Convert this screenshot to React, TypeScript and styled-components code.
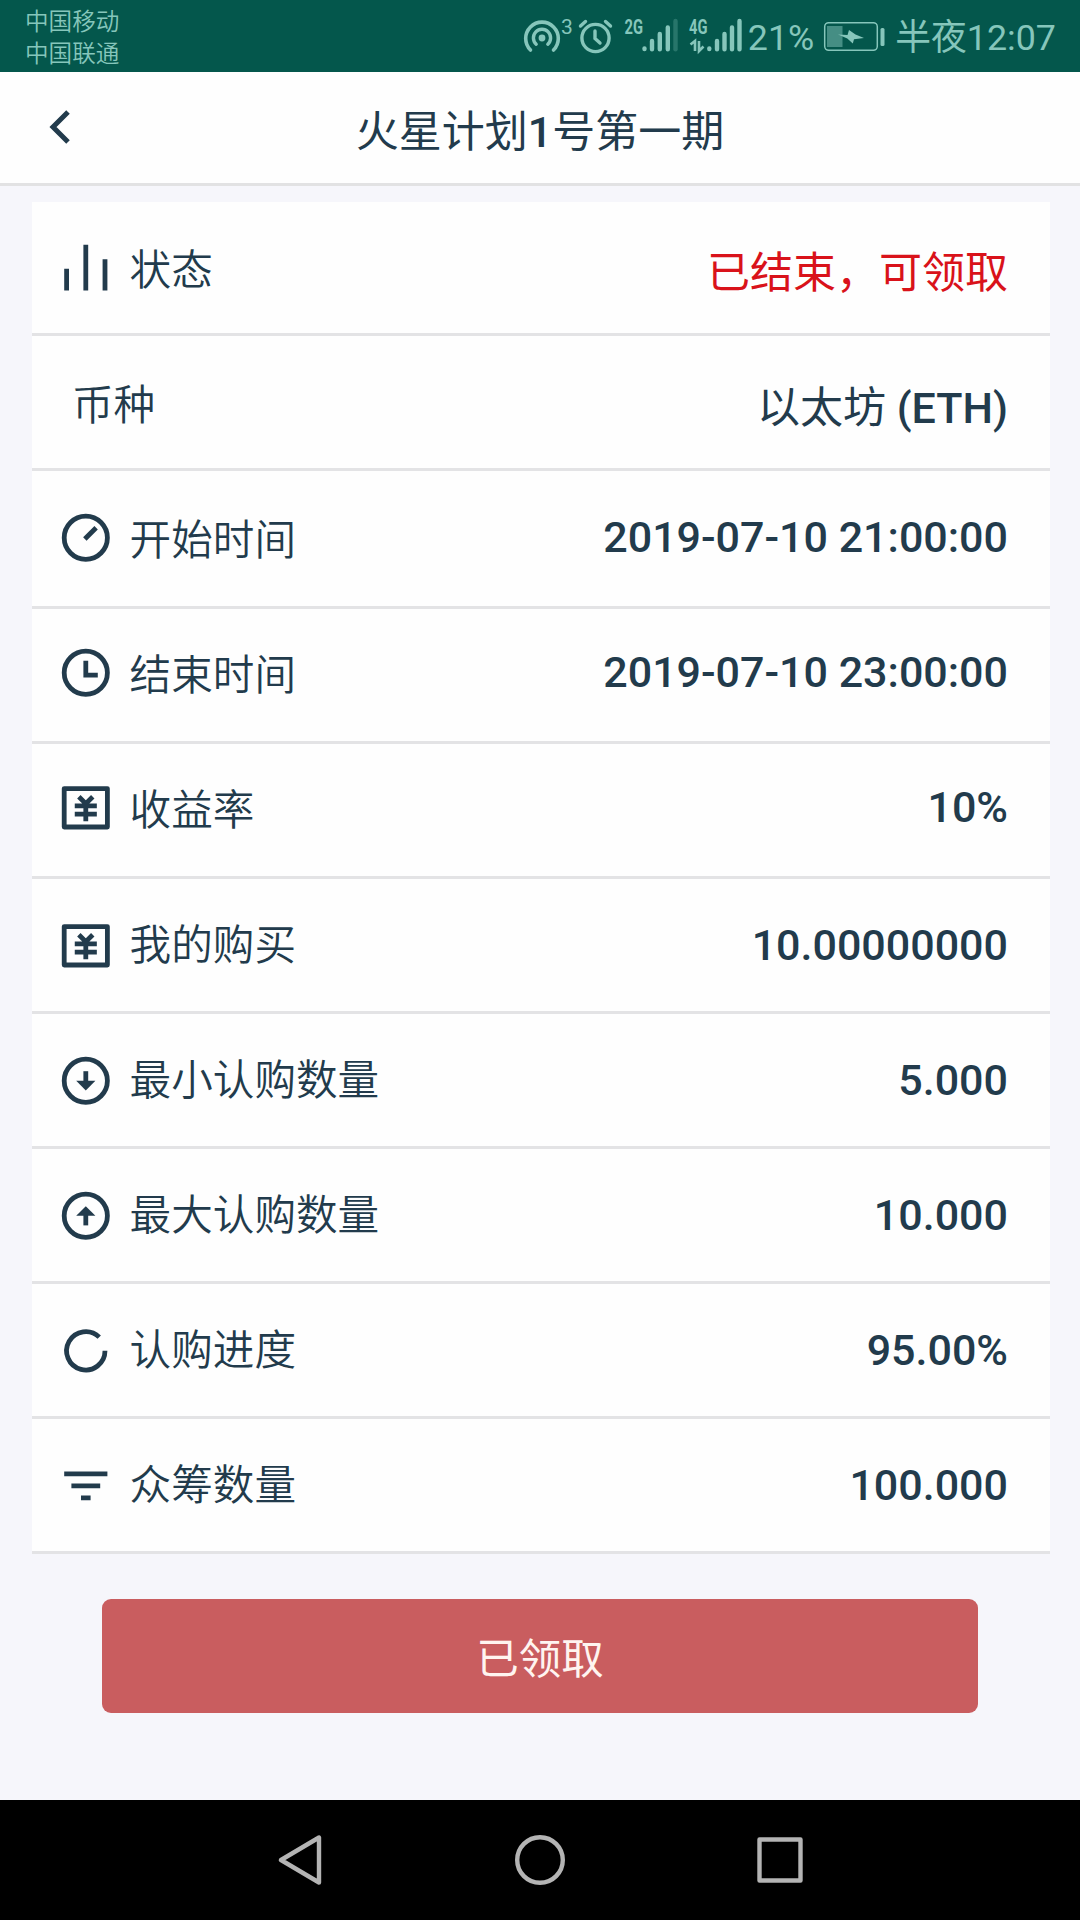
import React from 'react';
import styled, { createGlobalStyle } from 'styled-components';

const ink = '#223b4c';
const mint = '#86c6bb';
const latin = `Roboto, "Noto Sans CJK SC", sans-serif`;

const GlobalStyle = createGlobalStyle`
  *, *::before, *::after { box-sizing: border-box; }
  html, body { margin: 0; padding: 0; background: #f6f6fb; }
  body { font-family: ${latin}; color: ${ink}; }
`;

const Screen = styled.div`
  width: 1080px;
  height: 1920px;
  display: flex;
  flex-direction: column;
  overflow: hidden;
  background: #f6f6fb;
`;

const StatusBar = styled.div`
  flex: none;
  height: 72px;
  padding: 0 24px 0 25px;
  display: flex;
  justify-content: space-between;
  background: #04574c;
  color: ${mint};
`;

const Carriers = styled.div`
  display: flex;
  flex-direction: column;
  padding-top: 5.5px;
  font-size: 23.6px;
  line-height: 32.5px;
  font-weight: 350;
`;

const Indicators = styled.div`
  display: flex;
  align-items: flex-start;
`;

const StatusText = styled.span<{ $left: number }>`
  margin-left: ${(p) => p.$left}px;
  font-size: 35.8px;
  line-height: 76px;
  font-weight: 400;
  white-space: nowrap;
`;

const BatteryIcon = styled.svg`
  margin-left: 8px;
`;

const TitleBar = styled.header`
  flex: none;
  height: 114px;
  display: grid;
  grid-template-columns: 120px 1fr 120px;
  align-items: center;
  background: #fefefe;
  border-bottom: 3px solid #e2e2e3;
`;

const BackButton = styled.button`
  border: 0;
  padding: 0 0 1px 42px;
  height: 111px;
  background: none;
  color: ${ink};
  display: flex;
  align-items: center;
`;

const Title = styled.h1`
  margin: 9px 0 0;
  text-align: center;
  font-size: 43px;
  font-weight: 400;
  line-height: 60px;
  white-space: nowrap;
`;

const Medium = styled.span`
  font-weight: 500;
`;

const Content = styled.main`
  flex: 1;
  padding: 16px 30px 0 32px;
  display: flex;
  flex-direction: column;
`;

const List = styled.section`
  display: flex;
  flex-direction: column;
  background: #fefefe;
`;

const Row = styled.div<{ $height: number; $lift: number }>`
  height: ${(p) => p.$height}px;
  padding: 2px 42px ${(p) => p.$lift}px 25px;
  display: flex;
  align-items: center;
  border-bottom: 3px solid #e3e3e5;
`;

const RowIcon = styled.svg`
  flex: none;
  width: 57.6px;
  height: 57.6px;
  margin-right: 15px;
  fill: none;
  stroke: ${ink};
  stroke-width: 2;
`;

const Label = styled.span<{ $bare: boolean; $drop: number }>`
  margin-left: ${(p) => (p.$bare ? 15 : 0)}px;
  margin-top: ${(p) => p.$drop}px;
  font-size: 41.6px;
  line-height: 60px;
  font-weight: 350;
  white-space: nowrap;
`;

const Value = styled.span<{ $red?: boolean; $drop: number }>`
  margin-left: auto;
  margin-top: ${(p) => p.$drop}px;
  font-size: 43px;
  line-height: 60px;
  font-weight: 400;
  white-space: nowrap;
  color: ${(p) => (p.$red ? '#d9121a' : ink)};
`;

const ClaimButton = styled.button`
  margin: 45px 72px 0 70px;
  height: 114px;
  border: 0;
  border-radius: 9px;
  background: #c95d5f;
  color: #fff4f0;
  font-family: ${latin};
  font-size: 42.5px;
  line-height: 60px;
  padding: 7px 0 0;
`;

const NavBar = styled.nav`
  flex: none;
  height: 120px;
  display: flex;
  justify-content: center;
  align-items: center;
  gap: 190px;
  background: #000;
`;

const NavIcon = styled.svg`
  width: 50px;
  height: 50px;
  fill: none;
  stroke: #b4b4b4;
  stroke-width: 4.4;
  stroke-linejoin: round;
`;

const yen = (
  <>
    <rect x="3" y="4" width="18" height="16" strokeLinejoin="round" />
    <path d="M9.1 7.4 12 10.3l2.9-2.9M7.4 11.2h9.2M7.4 14.6h9.2M12 10v7.6" strokeWidth="2" />
  </>
);

const icons = {
  bars: <path d="M4 12v9M12 2v19M20 8v13" />,
  gauge: (
    <>
      <circle cx="12" cy="12" r="9" />
      <path d="m11.6 12.5 4.7-4.7" />
    </>
  ),
  clock: (
    <>
      <circle cx="12" cy="12" r="9" />
      <path d="M12 7v6h5" />
    </>
  ),
  yen,
  down: (
    <>
      <circle cx="12" cy="12" r="9" />
      <path d="M12 8v5" />
      <path d="M8 12h8l-4 4z" fill={ink} stroke="none" />
    </>
  ),
  up: (
    <>
      <circle cx="12" cy="12" r="9" />
      <path d="M12 16v-5" />
      <path d="M8 12h8l-4-4z" fill={ink} stroke="none" />
    </>
  ),
  loader: <path d="M17.6 6.3A8 8 0 1 0 20 12" />,
  filter: <path d="M3 7h18M6 12h12M10 17h4" />,
};

type RowData = {
  icon?: keyof typeof icons;
  label: string;
  name?: string;
  amount?: string;
  red?: boolean;
  height: number;
  lift?: number;
  labelDrop: number;
  drop?: number;
};

const rows: RowData[] = [
  { icon: 'bars', label: '状态', name: '已结束，可领取', red: true, height: 134, labelDrop: 5, drop: 8 },
  { label: '币种', name: '以太坊 ', amount: '(ETH)', height: 135, labelDrop: 5, drop: 10 },
  { icon: 'gauge', label: '开始时间', amount: '2019-07-10 21:00:00', height: 138, lift: 3, labelDrop: 5 },
  { icon: 'clock', label: '结束时间', amount: '2019-07-10 23:00:00', height: 135, lift: 6, labelDrop: 5 },
  { icon: 'yen', label: '收益率', amount: '10%', height: 135, lift: 6, labelDrop: 5 },
  { icon: 'yen', label: '我的购买', amount: '10.00000000', height: 135, labelDrop: 0 },
  { icon: 'down', label: '最小认购数量', amount: '5.000', height: 135, labelDrop: 0 },
  { icon: 'up', label: '最大认购数量', amount: '10.000', height: 135, labelDrop: 0 },
  { icon: 'loader', label: '认购进度', amount: '95.00%', height: 135, labelDrop: 0 },
  { icon: 'filter', label: '众筹数量', amount: '100.000', height: 135, labelDrop: 0 },
];

const StatusIcons = () => (
  <svg width="224" height="72" viewBox="522 0 224 72" fill="none" stroke={mint} strokeLinecap="round">
    <circle cx="542" cy="38" r="3.4" fill={mint} stroke="none" />
    <path d="M530.5 50A16.3 16.3 0 1 1 553.5 50" strokeWidth="3.6" />
    <path d="M536.2 44.2A8.6 8.6 0 1 1 547.8 44.2" strokeWidth="3.4" />
    <text x="561" y="34" fill={mint} stroke="none" fontSize="21" fontFamily="Roboto">3</text>
    <circle cx="595.5" cy="38" r="13.6" strokeWidth="3.4" />
    <path d="M595 31v7.5l5 4.5" strokeWidth="3.4" />
    <path d="m580.5 26 5-4.5M610.5 26l-5-4.5" strokeWidth="3.4" />
    <text x="624.5" y="34" fill={mint} stroke="none" fontSize="21" fontWeight="700" fontFamily="Roboto" textLength="18.5" lengthAdjust="spacingAndGlyphs">2G</text>
    <g strokeWidth="4.4">
      <path d="M644.5 48.5v.6M652 41v8.3M659.8 34v15.3M667.8 27.5v21.8" />
      <path d="M675.5 21v28.3" opacity=".28" />
    </g>
    <text x="689" y="34" fill={mint} stroke="none" fontSize="21" fontWeight="700" fontFamily="Roboto" textLength="18.5" lengthAdjust="spacingAndGlyphs">4G</text>
    <path d="M690.5 44.5 695 41v10M699 41v10l4.5-4.5" strokeWidth="2.6" strokeLinecap="butt" />
    <path d="M709.3 48.5v.6M717 41v8.3M724.5 34v15.3M732 27.5v21.8M739.5 21v28.3" strokeWidth="4.4" />
  </svg>
);

const Battery = () => (
  <BatteryIcon width="64" height="72" viewBox="822 0 64 72">
    <rect x="824.7" y="22.7" width="52.6" height="27.6" rx="4" fill="none" stroke={mint} strokeWidth="1.5" />
    <rect x="827" y="26" width="15.5" height="21" fill={mint} opacity=".5" />
    <rect x="880.5" y="28" width="4" height="18" rx="1.5" fill={mint} />
    <path d="M838 34.5l9.500.500 1.500-5 6.500 4.500 8.500 3.500-10 1.200-1.200 4.300-5.500-5z" fill={mint} />
  </BatteryIcon>
);

export default function App() {
  return (
    <Screen>
      <GlobalStyle />
      <StatusBar>
        <Carriers>
          <span>中国移动</span>
          <span>中国联通</span>
        </Carriers>
        <Indicators>
          <StatusIcons />
          <StatusText $left={2}>21%</StatusText>
          <Battery />
          <StatusText $left={9}>半夜12:07</StatusText>
        </Indicators>
      </StatusBar>
      <TitleBar>
        <BackButton aria-label="返回">
          <svg width="36" height="36" viewBox="0 0 36 36" fill="none" stroke="currentColor" strokeWidth="5">
            <path d="M26 3 11 18l15 15" />
          </svg>
        </BackButton>
        <Title>
          火星计划<Medium>1</Medium>号第一期
        </Title>
      </TitleBar>
      <Content>
        <List>
          {rows.map((r) => (
            <Row key={r.label} $height={r.height} $lift={r.lift ?? 0}>
              {r.icon && <RowIcon viewBox="0 0 24 24">{icons[r.icon]}</RowIcon>}
              <Label $bare={!r.icon} $drop={r.labelDrop}>
                {r.label}
              </Label>
              <Value $red={r.red} $drop={r.drop ?? -2}>
                {r.name}
                {r.amount && <Medium>{r.amount}</Medium>}
              </Value>
            </Row>
          ))}
        </List>
        <ClaimButton>已领取</ClaimButton>
      </Content>
      <NavBar>
        <NavIcon viewBox="0 0 50 50">
          <path d="M6 25 44 2.500v45z" />
        </NavIcon>
        <NavIcon viewBox="0 0 50 50">
          <circle cx="25" cy="25" r="22.800" />
        </NavIcon>
        <NavIcon viewBox="0 0 50 50">
          <rect x="4.500" y="4.500" width="41" height="41" />
        </NavIcon>
      </NavBar>
    </Screen>
  );
}
